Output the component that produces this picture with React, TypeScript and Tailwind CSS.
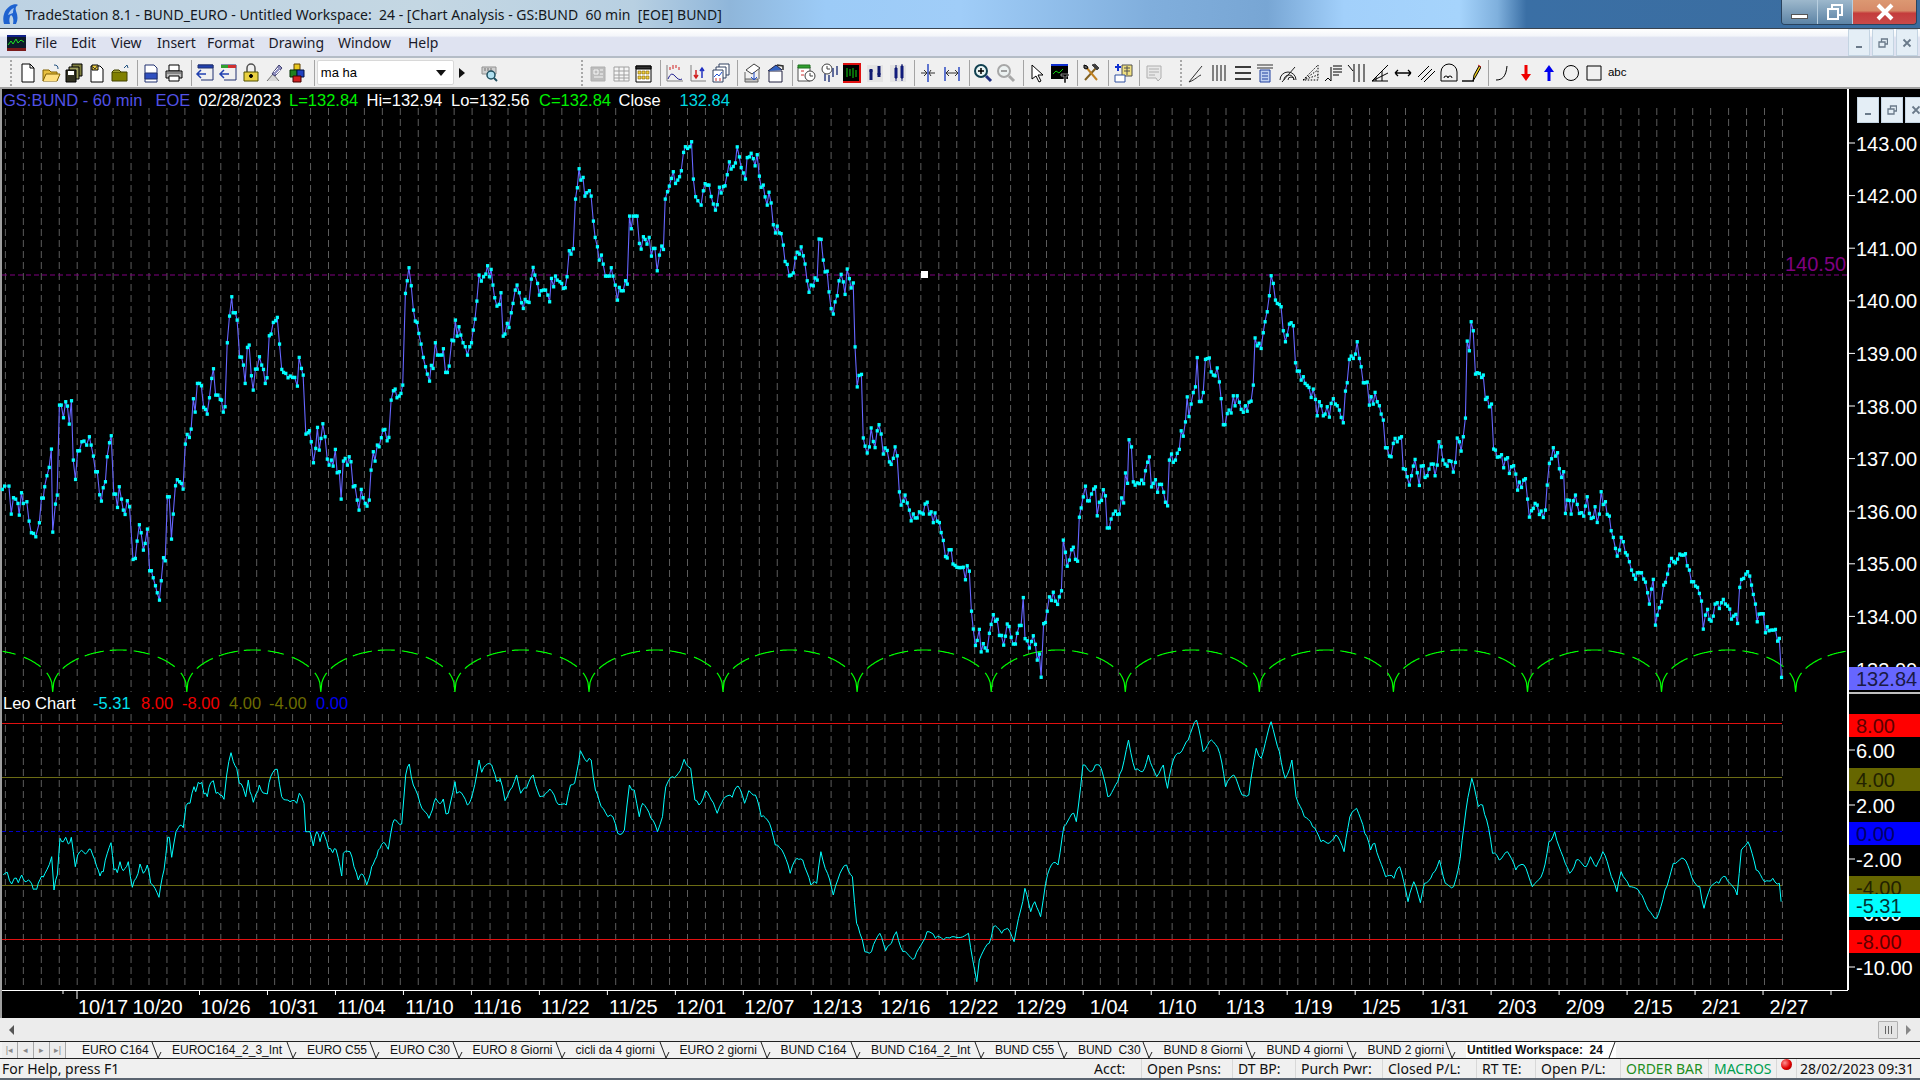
import React from "react";

const parse = (s: string) => s.trim().split(/\s+/).map((p) => p.split(",").map(Number));

const P1 = `5,1108 10,1098 20,1098 25,1182 30,1133 35,1137 40,1150 43,1185 48,1118 52,1150 60,1145 65,1203 70,1238 75,1240 80,1250 88,1208 93,1134 97,1134 100,1100 105,1067 110,1042 115,987 118,1236 124,1152 128,1125 133,855 137,855 142,893 147,845 151,858 155,912 160,842 164,1020 169,1078 174,992 178,992 183,965 188,963 194,975 200,950 204,975 209,1008 214,1055 218,1055 223,1124 227,1143 231,1103 236,1085 240,1010 245,968 249,947 255,1122 259,1122 263,1162 267,1100 272,1137 276,1170 280,1183 285,1142 290,1160 298,1318 303,1315 307,1263 312,1214 316,1238 321,1290 325,1270 330,1227 335,1352 339,1352 343,1373 348,1397 352,1418 357,1440 361,1382 366,1313 370,1322 375,1130 379,1130 384,1257 388,1182 393,1097 397,1079 402,1085 406,1090 410,1107 415,972 419,943 424,952 428,927 433,836 437,876 442,790 447,790 451,797 456,862 460,868 464,882 469,833 474,775 478,746 483,825 488,825 493,838 496,840 500,876 504,860 509,668 514,588 519,530 522,578 527,578 531,600 537,711 541,711 545,735 549,790 554,682 558,675 563,767 567,810 572,747 576,747 581,710 586,735 590,748 594,790 598,773 603,647 607,642 612,607 617,602 621,592 626,672 631,748 635,757 640,760 645,773 650,768 655,772 660,772 666,798 670,712 675,745 679,765 685,942 690,938 693,932 697,965 702,1028 707,985 711,922 715,990 719,955 723,911 728,950 733,1017 737,1035 742,1020 746,1038 751,988 755,1058 760,1055 764,1137 769,1023 773,1015 778,1035 782,1010 786,1025 791,1100 795,1097 800,1140 804,1170 809,1108 813,1133 818,1150 822,1158 827,1140 831,1050 836,995 840,1023 845,975 849,980 854,953 858,930 862,928 867,962 871,952 876,840 881,812 885,807 889,833 894,828 898,820 902,795 908,520 912,482 916,443 921,497 926,570 930,603 934,607 938,640 943,672 948,712 953,740 957,762 962,783 966,736 970,745 975,668 980,705 985,705 990,705 993,686 998,757 1002,757 1006,738 1012,660 1016,662 1020,600 1024,648 1028,620 1032,645 1037,668 1042,680 1047,705 1052,680 1056,668 1060,630 1064,597 1068,543 1073,465 1078,483 1083,470 1088,462 1092,437 1096,470 1100,448 1104,495 1108,533 1113,558 1118,553 1122,518 1127,648 1131,642 1136,610 1140,622 1145,578 1149,550 1154,510 1158,495 1163,518 1168,548 1172,565 1176,538 1180,545 1185,547 1190,477 1194,442 1198,465 1204,490 1208,525 1212,512 1217,510 1222,510 1227,525 1231,545 1235,475 1240,500 1244,468 1248,480 1254,485 1258,490 1262,505 1266,503 1270,470 1275,392 1279,402 1284,386 1289,237 1293,203 1297,146 1301,180 1306,172 1310,228 1314,218 1320,212 1324,228 1329,303 1333,352 1338,380 1342,420 1347,405 1351,432 1356,468 1360,468 1365,468 1369,443 1373,468 1378,495 1383,540 1387,502 1391,512 1396,512 1401,482 1405,492 1410,288 1414,326 1418,288 1423,288 1427,288 1432,370 1436,387 1441,350 1445,358 1449,372 1454,352 1459,408 1463,385 1467,385 1472,452 1477,405 1482,378 1486,388 1490,237 1495,215 1499,198 1504,175 1508,155 1513,190 1518,180 1522,170 1526,152 1531,97 1535,80 1540,85 1545,80 1549,65 1553,177 1558,230 1563,242`;
const P2 = `3,238 9,198 14,178 20,182 25,182 31,214 37,235 43,252 48,237 54,188 59,204 65,186 70,184 76,153 82,117 87,137 93,130 99,120 104,75 110,103 115,133 121,148 127,165 132,105 138,103 143,93 149,108 154,128 160,97 166,157 171,188 177,182 182,215 188,238 193,202 199,232 205,293 211,316 216,297 222,316 227,318 233,350 238,396 244,404 250,436 255,434 261,428 267,386 272,370 278,375 283,355 289,380 294,403 300,450 305,482 311,462 317,464 322,442 328,448 333,333 339,334 345,392 350,425 356,423 361,481 367,528 373,543 378,509 384,492 389,450 395,432 401,453 406,488 412,417 418,444 423,470 429,456 434,635 440,747 445,715 452,712 457,890 462,913 468,932 474,915 479,862 485,900 490,917 496,870 501,853 507,879 513,935 518,918 524,925 530,957 535,964 541,947 546,915 552,940 558,1041 563,1078 569,1067 574,1050 580,1072 586,1092 591,1122 597,1103 602,1114 608,1114 614,1097 619,1100 625,1103 630,1075 636,1070 642,1103 647,1097 653,1127 658,1100 664,1123 670,1127 675,1155 681,1177 687,1222 692,1226 697,1203 703,1203 708,1243 714,1247 719,1252 725,1253 731,1253 737,1252 743,1287 748,1248 754,1263 760,1375 765,1425 771,1471 776,1457 782,1426 787,1489 793,1466 798,1478 804,1486 810,1437 815,1412 821,1385 827,1403 832,1398 838,1443 844,1443 850,1470 855,1445 860,1411 865,1418 871,1448 877,1467 883,1467 888,1437 894,1415 899,1415 905,1337 910,1452 916,1458 922,1478 928,1460 933,1444 939,1468 944,1512 950,1495 955,1560 962,1410 967,1407 972,1375 978,1335 984,1345 989,1322 995,1347 1001,1356 1006,1335 1012,1318 1017,1176 1023,1210 1028,1249 1034,1232 1040,1203 1045,1196 1051,1230 1057,1235 1062,1112 1067,1086 1073,1055 1079,1025 1085,1066 1090,1066 1096,1047 1102,1033 1107,1027 1112,1108 1118,1070 1124,1065 1129,1035 1135,1052 1140,1142 1146,1142 1151,1117 1157,1103 1163,1095 1169,1104 1174,1103 1180,1058 1186,1072 1191,988 1197,1017 1201,895 1208,915 1213,1013 1218,1022 1224,1016 1230,1018 1236,1008 1242,1018 1247,982 1253,958 1258,943 1264,1027 1269,1017 1275,1007 1281,1042 1286,1020 1292,1020 1298,1042 1303,1070 1309,1080 1314,952 1320,935 1325,958 1331,952 1336,933 1342,922 1347,870 1353,885 1359,845 1364,775 1369,830 1375,795 1381,763 1387,747 1392,665 1398,788 1403,788 1409,763 1415,670 1420,668 1426,666 1431,705 1437,714 1442,716 1448,694 1454,733 1459,780 1465,853 1470,853 1476,822 1481,812 1487,820 1493,772 1498,800 1504,772 1510,790 1515,810 1521,818 1527,800 1532,815 1537,790 1543,787 1549,742 1554,610 1560,632 1565,625`;
const P3 = `3,265 9,218 14,185 20,155 26,107 31,47 37,70 43,120 48,130 54,133 59,140 65,212 71,245 76,225 82,192 87,188 93,197 99,308 104,333 110,333 115,360 121,350 126,370 132,376 137,382 143,412 149,387 155,418 160,467 166,425 171,437 177,467 182,462 188,440 194,471 199,430 205,416 211,432 216,437 222,450 227,472 233,488 239,393 244,368 250,298 255,288 261,295 267,282 272,245 278,295 283,320 289,368 294,368 300,366 306,435 311,410 317,432 322,397 328,425 334,437 339,462 345,480 351,563 356,563 362,588 367,590 373,550 378,535 384,545 390,534 396,530 401,626 407,628 412,650 418,675 424,647 429,618 434,598 440,638 446,676 451,618 457,617 462,652 468,647 473,627 479,612 485,612 490,647 496,615 501,545 507,560 512,600 518,612 524,618 529,602 535,604 541,636 547,607 552,534 558,545 563,573 569,530 575,474 580,243 586,272 591,185 597,212 603,342 608,338 614,340 620,352 625,345 631,418 636,412 642,440 648,432 654,567 659,570 664,591 670,590 676,584 682,623 687,597 693,593 698,640 704,620 710,617 716,642 721,690 726,666 732,682 738,660 743,656 749,717 754,771 760,752 765,745 770,730 776,735 782,763 787,753 793,772 799,750 804,675 810,610 816,596 821,563 827,588 833,578 838,626 844,652 850,635 855,760 860,720 866,721 871,762 877,722 883,705 888,733 894,760 900,758 906,768 911,738 916,710 922,760 927,775 933,772 938,740 944,787 950,762 955,695 961,733 967,725 972,763 978,768 983,812 989,832 995,865 1000,888 1006,870 1011,832 1017,845 1023,878 1028,885 1034,905 1040,930 1046,945 1051,957 1056,938 1062,938 1068,938 1074,957 1079,966 1085,998 1090,1032 1096,987 1101,958 1107,1095 1112,1065 1118,1043 1124,1025 1130,975 1135,967 1141,942 1146,917 1152,895 1158,905 1163,908 1169,897 1175,882 1180,885 1186,885 1191,881 1196,917 1202,930 1208,965 1214,965 1219,978 1225,982 1230,1000 1236,1023 1241,1107 1247,1065 1253,1048 1258,1078 1263,1083 1269,1068 1274,1032 1280,1028 1286,1045 1292,1028 1297,1018 1303,1032 1309,1038 1315,1047 1320,1077 1326,1068 1332,1063 1337,1090 1343,982 1348,958 1354,955 1360,942 1365,935 1371,948 1376,975 1381,1003 1387,1032 1392,1085 1397,1062 1403,1061 1409,1061 1415,1118 1420,1100 1425,1112 1431,1110 1437,1110 1443,1108 1449,1143 1454,1135 1460,1252`;
const O1 = `10,705 22,697 35,732 43,715 55,728 65,705 70,717 85,720 100,748 110,748 125,708 135,700 155,650 162,750 172,705 180,595 190,605 197,592 205,612 214,592 226,680 233,645 250,635 262,637 272,628 290,680 300,708 310,695 322,640 333,608 342,690 352,698 360,665 370,692 385,665 397,742 408,715 420,672 430,700 442,675 452,730 465,745 477,772 492,690 503,592 508,592 515,652 528,575 535,563 550,563 558,497 570,490 582,440 587,455 595,427 605,427 612,462 622,470 632,428 640,422 648,460 660,465 672,478 680,405 693,338 700,365 710,385 718,430 730,445 737,470 745,420 750,455 760,487 768,462 778,435 795,460 802,462 812,410 832,388 845,470 870,485 890,490 898,460 912,490 917,575 930,575 940,618 950,575 960,605 970,575 985,625 998,638 1008,628 1015,655 1025,708 1030,640 1050,635 1062,680 1075,720 1085,702 1100,735 1115,680 1130,650 1140,625 1155,610 1165,628 1178,550 1187,540 1205,552 1217,405 1228,372 1240,435 1260,490 1287,535 1297,510 1307,475 1315,487 1330,477 1338,522 1345,520 1365,425 1370,460 1378,455 1402,495 1418,460 1437,360 1445,397 1462,372 1475,375 1490,425 1500,425`;
const O2 = `0,205 6,272 12,240 20,195 25,250 32,235 40,195 48,260 55,250 60,237 68,275 80,285 85,225 90,220 97,122 105,155 110,150 115,240 122,290 130,320 136,320 142,370 150,360 156,225 162,240 168,320 172,280 182,325 190,365 196,320 200,230 208,200 215,190 222,148 230,175 235,270 240,285 248,242 255,270 262,310 270,265 280,262 287,228 295,280 300,242 308,255 315,320 325,340 332,405 340,420 350,490 358,445 365,450 375,525 382,520 387,425 395,490 402,555 410,490 418,465 425,500 430,640 434,670 440,725 448,725 458,670 465,722 472,700 478,665 486,725 500,745 515,665 525,685 535,690 545,680 565,670 575,815 578,750 590,700 595,650 605,670 612,655 620,695 628,600 633,535 640,605 645,575 652,620 658,520 665,465 673,465 680,350 692,310 695,335 703,165 712,185 718,165 725,175 733,260 745,215 750,180 758,90 766,180 775,185 782,135 792,200 800,165 805,235 812,150 820,130 830,90 840,30 848,125 858,90 868,130 875,230 885,195 895,255 903,255 912,115 918,145 930,35 940,125 947,205 955,150 960,260 970,320 980,350 990,395 1000,400 1008,375 1018,425 1025,320 1033,295 1043,370 1050,420 1055,400 1068,500 1078,505 1085,470 1095,575 1102,515 1110,578 1115,520 1125,490 1133,450 1140,520 1150,530 1158,445 1165,300 1172,205 1180,290 1185,285 1190,330 1197,430 1205,450 1215,425 1225,480 1235,465 1245,530 1258,485 1265,395 1272,365 1282,440 1290,490 1298,450 1310,470 1315,440 1322,470 1330,425 1338,480 1347,545 1352,485 1362,530 1375,550 1385,600 1395,625 1405,540 1415,460 1428,447 1437,500 1447,530 1452,595 1460,530 1470,520 1478,500 1492,555 1497,420 1505,395 1515,480 1525,515 1535,505 1543,520 1545,575`;

const price: number[][] = [
  ...parse(P1).map(([x, y]) => [x / 2.24, 120 + y / 3]),
  ...parse(P2).map(([x, y]) => [700 + x / 2.8, 120 + y / 2.8]),
  ...parse(P3).map(([x, y]) => [1260 + x / 2.8, 260 + y / 3]),
];
const oscRaw: number[][] = [
  ...parse(O1).map(([x, y]) => [x / 3, 640 + y / 3]),
  ...parse(O2).map(([x, y]) => [500 + x / 1.206, 710 + y / 3]),
];
const osc: number[][] = [];
for (let i = 0; i < oscRaw.length - 1; i++) {
  const [x0, y0] = oscRaw[i];
  const [x1, y1] = oscRaw[i + 1];
  const n = Math.max(1, Math.round((x1 - x0) / 2));
  for (let k = 0; k < n; k++) {
    const t = k / n;
    const w = k === 0 ? 0 : Math.sin((x0 + k) * 12.9898) * 2.5;
    osc.push([x0 + (x1 - x0) * t, y0 + (y1 - y0) * t + w]);
  }
}
osc.push(oscRaw[oscRaw.length - 1]);

const pts = (a: number[][]) => a.map(([x, y]) => `${x.toFixed(1)},${y.toFixed(1)}`).join(" ");

// cycle arches: fixed dash runs measured from each cusp, so that every V shows
const CYCLE_FIRST = 52.7;
const CYCLE_STEP = 134.07;
const cycleY = (off: number) => 650 + 42 * (1 - Math.pow(Math.sin((Math.PI * off) / CYCLE_STEP), 0.4));
const runs: [number, number][] = [[10, 26], [32, 51], [57, 74], [81, 97], [105, 122]];
const cycleSegs: string[] = [];
const segment = (a: number, b: number, cusp: number) => {
  const out: string[] = [];
  for (let o = a; o <= b; o += 1) {
    const x = cusp + o;
    if (x < 2 || x > 1846) continue;
    out.push(`${x.toFixed(1)},${cycleY(Math.abs(o)).toFixed(1)}`);
  }
  if (out.length > 1) cycleSegs.push(out.join(" "));
};
for (let c = -1; c < 15; c++) {
  const cusp = CYCLE_FIRST + c * CYCLE_STEP;
  segment(-6, 6, cusp);
  runs.forEach(([a, b]) => segment(a, b, cusp));
}

const gridXs = Array.from({ length: 100 }, (_, i) => 5.4 + 17.95 * i);
const dates = ["10/26","10/31","11/04","11/10","11/16","11/22","11/25","12/01","12/07","12/13","12/16","12/22","12/29","1/04","1/10","1/13","1/19","1/25","1/31","2/03","2/09","2/15","2/21","2/27"];
const priceLabels = [143,142,141,140,139,138,137,136,135,134,133];

function Chart() {
  const Y0 = 89;
  return (
    <svg width={1920} height={929} viewBox={`0 ${Y0} 1920 929`} className="block font-['Liberation_Sans',sans-serif]">
      <rect x={0} y={Y0} width={1920} height={929} fill="#000" />
      <rect x={0} y={Y0} width={2} height={929} fill="#a0a0a0" />
      {gridXs.map((x) => (
        <g key={x}>
          <line x1={x} x2={x} y1={108} y2={692} stroke="#5c5c5c" strokeDasharray="7 4" />
          <line x1={x} x2={x} y1={714} y2={987} stroke="#5c5c5c" strokeDasharray="7 4" />
        </g>
      ))}
      <line x1={2} x2={1847} y1={275} y2={275} stroke="#800080" strokeDasharray="5 3" />
      {cycleSegs.map((s, i) => (
        <polyline key={i} points={s} fill="none" stroke="#00ff00" strokeWidth={1.2} />
      ))}
      <polyline points={pts(price)} fill="none" stroke="#6666ff" strokeWidth={1.1} />
      {price.map(([x, y], i) => (
        <rect key={i} x={x - 1.5} y={y - 1.6} width={3.2} height={3.4} fill="#00ffff" />
      ))}
      <rect x={921} y={271} width={7} height={7} fill="#fff" />

      <line x1={2} x2={1782} y1={723.5} y2={723.5} stroke="#e01010" strokeWidth={1.2} />
      <line x1={2} x2={1782} y1={777.5} y2={777.5} stroke="#6c6c14" strokeWidth={1.2} />
      <line x1={2} x2={1782} y1={831.5} y2={831.5} stroke="#0000c8" strokeDasharray="4 3" />
      <line x1={2} x2={1782} y1={885.5} y2={885.5} stroke="#6c6c14" strokeWidth={1.2} />
      <line x1={2} x2={1782} y1={939.5} y2={939.5} stroke="#e01010" strokeWidth={1.2} />
      <polyline points={pts(osc)} fill="none" stroke="#00ffff" strokeWidth={1} />

      {/* legends */}
      <g fontSize={16.5}>
        <text x={3} y={106} fill="#5252e6">GS:BUND - 60 min</text>
        <text x={155.5} y={106} fill="#5252e6">EOE</text>
        <text x={198.5} y={106} fill="#fff">02/28/2023</text>
        <text x={289} y={106} fill="#00f000">L=132.84</text>
        <text x={366.5} y={106} fill="#fff">Hi=132.94</text>
        <text x={451} y={106} fill="#fff">Lo=132.56</text>
        <text x={539} y={106} fill="#00f000">C=132.84</text>
        <text x={618.5} y={106} fill="#fff">Close</text>
        <text x={679.5} y={106} fill="#00d8e0">132.84</text>
        <text x={3} y={709} fill="#fff">Leo Chart</text>
        <text x={93} y={709} fill="#00e0f0">-5.31</text>
        <text x={141} y={709} fill="#f00000">8.00</text>
        <text x={182} y={709} fill="#f00000">-8.00</text>
        <text x={229} y={709} fill="#6c6c00">4.00</text>
        <text x={269} y={709} fill="#6c6c00">-4.00</text>
        <text x={316} y={709} fill="#0000f0">0.00</text>
      </g>
      <text x={1785} y={271} fontSize={20} fill="#800080">140.50</text>

      {/* right axis */}
      <g fontSize={20} fill="#fff">
        {priceLabels.map((p, i) => (
          <g key={p}>
            <line x1={1849} x2={1855} y1={143 + i * 52.6} y2={143 + i * 52.6} stroke="#fff" />
            <text x={1856} y={150.5 + i * 52.6}>{p}.00</text>
          </g>
        ))}
        {[["6.00", 750], ["2.00", 805], ["-2.00", 859], ["-6.00", 913], ["-10.00", 967]].map(([t, y]) => (
          <g key={t as string}>
            <line x1={1849} x2={1855} y1={y as number} y2={y as number} stroke="#fff" />
            <text x={1856} y={(y as number) + 7.5}>{t}</text>
          </g>
        ))}
      </g>
      <line x1={1848} x2={1848} y1={89} y2={990} stroke="#fff" strokeWidth={2} />
      <line x1={1847} x2={1920} y1={693} y2={693} stroke="#fff" strokeWidth={1.5} />
      {[
        [667, 23, "#6666ff", "132.84", "#1a1a44"],
        [714, 23, "#ff0000", "8.00", "#5c0000"],
        [768, 23, "#666600", "4.00", "#222200"],
        [822, 23, "#0000ff", "0.00", "#000066"],
        [876, 23, "#666600", "-4.00", "#222200"],
        [894, 23, "#00ffff", "-5.31", "#003333"],
        [930, 23, "#ff0000", "-8.00", "#5c0000"],
      ].map(([y, h, bg, t, c]) => (
        <g key={t as string}>
          <rect x={1849} y={y as number} width={71} height={h as number} fill={bg as string} />
          <text x={1856} y={(y as number) + 19} fontSize={20} fill={c as string}>{t}</text>
        </g>
      ))}

      {/* bottom axis */}
      <line x1={2} x2={1848} y1={990.5} y2={990.5} stroke="#fff" />
      <line x1={63} x2={63} y1={990} y2={994} stroke="#fff" />
      <line x1={77} x2={77} y1={990} y2={999} stroke="#fff" />
      {dates.map((d, i) => (
        <line key={d} x1={199.5 + i * 67.98} x2={199.5 + i * 67.98} y1={990} y2={995} stroke="#fff" />
      ))}
      <line x1={1831} x2={1831} y1={990} y2={995} stroke="#fff" />
      <g fontSize={20} fill="#fff" textAnchor="middle">
        <text x={103} y={1014}>10/17</text>
        <text x={157.5} y={1014}>10/20</text>
        {dates.map((d, i) => (
          <text key={d} x={225.5 + i * 67.98} y={1014}>{d}</text>
        ))}
      </g>
    </svg>
  );
}

const I = ({ children, dim }: { children?: React.ReactNode; dim?: boolean }) => (
  <div className={`flex h-[22px] w-[22.9px] shrink-0 items-center justify-center ${dim ? "opacity-45" : ""}`}>
    <svg width={20} height={22} viewBox="0 0 20 22" fill="none" stroke="#000" strokeWidth={1}>{children}</svg>
  </div>
);
const Sep = () => (
  <div className="flex h-[26px] w-[8.4px] shrink-0 justify-end pr-[2px]">
    <div className="h-full w-px bg-[#a4a4a4]" />
  </div>
);
const Grip = () => <div className="h-[26px] w-[2px] shrink-0 border-l-2 border-dotted border-[#a8a8a8]" />;

function Toolbar() {
  return (
    <div className="flex h-[31px] shrink-0 items-center border-b-2 border-[#a0a0a0] bg-[#f0f0f0] pl-[10px] font-['Liberation_Sans',sans-serif]">
      <Grip />
      <div className="w-[5px] shrink-0" />
      <I><path d="M4 2h8l4 4v14H4z" fill="#fff" /><path d="M12 2v4h4" /></I>
      <I><path d="M2 8h6l2 2h6v9H2z" fill="#e8c040" stroke="#806000" /><path d="M2 19l3-7h14l-3 7" fill="#ffe080" stroke="#806000" /><path d="M13 3c3 0 4 1 4 4" stroke="#205080" /></I>
      <I><path d="M8 2h10v12H8z" fill="#808040" /><path d="M5 5h10v12H5z" fill="#a0a060" /><path d="M2 8h10v12H2z" fill="#303020" /><path d="M4 9h6v4H4z" fill="#fff" stroke="none" /></I>
      <I><path d="M4 4h9l3 3v13H4z" fill="#fff" /><path d="M5 3h6v5H5z" fill="#f0d040" /><path d="M6 5l2 2 3-4" stroke="#303030" /></I>
      <I><path d="M2 10h15v9H2z" fill="#808000" stroke="#404000" /><path d="M2 10l2-2h5l2 2" fill="#a0a030" stroke="#404000" /><path d="M14 6l3-3 1 3" stroke="#205080" /></I>
      <Sep />
      <I><path d="M4 3h9l3 3v14H4z" fill="#fff" stroke="#203070" /><path d="M4 11h12v6H4z" fill="#3050c0" stroke="#203070" /></I>
      <I><path d="M5 3h10v6H5z" fill="#fff" /><path d="M2 9h16v7H2z" fill="#c0c0c0" /><path d="M5 14h10v5H5z" fill="#fff" /><path d="M3 11h14" stroke="#505050" /></I>
      <Sep />
      <I><path d="M3 3h15v15H6" stroke="#203070" /><path d="M3 3h15v3H3z" fill="#2040b0" stroke="#203070" /><path d="M2 12h9M6 8l-4 4 4 4" stroke="#2040b0" strokeWidth={1.5} /></I>
      <I><path d="M3 3h15v15H6" stroke="#203070" /><path d="M3 3h7v3H3z" fill="#30a030" stroke="none" /><path d="M10 3h8v3h-8z" fill="#d03030" stroke="none" /><path d="M2 12h9M6 8l-4 4 4 4" stroke="#2040b0" strokeWidth={1.5} /></I>
      <I><path d="M6 10V6a4 4 0 018 0v4" stroke="#505050" strokeWidth={1.5} /><path d="M3 10h14v9H3z" fill="#e8d040" stroke="#505000" /><circle cx={10} cy={14} r={1.5} fill="#000" /></I>
      <I><path d="M3 19l6-7 6 7" stroke="#707070" fill="#d8d8d8" /><path d="M8 12L15 3l3 3-7 8z" fill="#9090c0" stroke="#404070" /><path d="M10 10l4-4M12 12l4-4" stroke="#fff" /></I>
      <I><path d="M7 2h6v6H7z" fill="#e8c820" stroke="#604000" /><path d="M3 8h7v7H3z" fill="#208020" stroke="#003000" /><path d="M10 8h7v7h-7z" fill="#2040c0" stroke="#001040" /><path d="M6 14h8v6H6z" fill="#d02020" stroke="#400000" /></I>
      <Sep />
      <div className="flex h-[25px] w-[137px] shrink-0 items-center justify-between rounded-[2px] border border-[#d8d8d8] bg-white pl-[3px] pr-[7px] text-[13px] text-black">
        <span>ma ha</span>
        <div className="h-0 w-0 border-x-[5px] border-t-[6px] border-x-transparent border-t-[#111]" />
      </div>
      <div className="flex w-[16px] shrink-0 justify-center">
        <div className="h-0 w-0 border-y-[5px] border-l-[6px] border-y-transparent border-l-[#111]" />
      </div>
      <div className="w-[8.5px] shrink-0" />
      <I><path d="M2 5h14v7H2z" fill="#d0d0d0" stroke="#909090" /><path d="M5 6v3M8 6v3M11 6v3" stroke="#707070" /><circle cx={11} cy={13} r={4} fill="#b0e0f0" stroke="#205060" strokeWidth={1.5} /><path d="M14 16l3 3" stroke="#205060" strokeWidth={2} /></I>
      <div className="w-[80px] shrink-0" />
      <Grip />
      <div className="w-[3px] shrink-0" />
      <I dim><path d="M3 5h14v14H3z" fill="#808080" stroke="#606060" /><path d="M6 8h4v4H6zM12 8h3M12 12h3M6 15h9" stroke="#fff" /></I>
      <I dim><path d="M3 5h15v14H3z" fill="#fff" stroke="#404040" /><path d="M3 9h15M3 13h15M3 16h15M8 5v14M13 5v14" stroke="#404040" /></I>
      <I><path d="M3 4h15v16H3z" fill="#fff" stroke="#000" /><path d="M3 4h15v3H3z" fill="#303030" /><path d="M5 9h3v3H5zM9 9h3v3H9zM13 9h3v3h-3zM5 14h3v3H5zM9 14h3v3H9zM13 14h3v3h-3z" fill="#f0d040" stroke="#806000" strokeWidth={0.6} /></I>
      <Sep />
      <I><path d="M2 3v16h16" stroke="#808080" fill="#f0f0f0" /><path d="M3 17q3-8 7-3t7 3" stroke="#202090" /><path d="M5 5v3M8 3v4M11 3v3M14 5v3" stroke="#d02020" /></I>
      <I><path d="M3 3v16h15" stroke="#808080" /><path d="M8 8v8M6 13l2 3 2-3" stroke="#d02020" strokeWidth={1.5} /><path d="M14 16V6M12 9l2-3 2 3" stroke="#2030c0" strokeWidth={1.5} /></I>
      <I><path d="M8 2h10v11H8z" fill="#fff" stroke="#304060" /><path d="M5 5h10v11H5z" fill="#fff" stroke="#304060" /><path d="M2 8h10v12H2z" fill="#fff" stroke="#304060" /><path d="M3 15l3-3 2 2 3-4" stroke="#2050d0" /><path d="M5 19v-3M9 19v-3" stroke="#d03030" /></I>
      <Sep />
      <I><path d="M3 17h13v3H3z" fill="#c0c0c0" stroke="#606060" /><path d="M4 8l8-6 6 4-8 6z" fill="#fff" stroke="#404040" /><path d="M3 10v7M17 7v10" stroke="#606060" /><path d="M12 10v8M9 15l3 3 3-3" stroke="#2050d0" /></I>
      <I><path d="M4 9h13v11H4z" fill="#fff" stroke="#202040" /><path d="M3 9l8-6 6 5" fill="#3060c0" stroke="#202040" /><path d="M12 3l6 1v4" stroke="#303030" strokeWidth={1.5} /></I>
      <Sep />
      <I><path d="M2 5h12v14H2z" fill="#fff" stroke="#505050" /><path d="M2 3h12v3H2z" fill="#30a030" stroke="#207020" /><circle cx={14} cy={14} r={5} fill="#fff" stroke="#404040" /><path d="M14 11v3h3" stroke="#404040" /><path d="M5 9h3M5 13h3" stroke="#d03030" /></I>
      <I><circle cx={8} cy={7} r={5} fill="#fff" stroke="#404040" /><path d="M8 4v3h3" stroke="#404040" /><path d="M6 12v7M10 13v7M14 6v9M18 4v9" stroke="#304080" strokeWidth={1.5} /></I>
      <I><path d="M1 2h18v18H1z" fill="#000" stroke="none" /><path d="M1 2h18M18 2v18M1 20h18" stroke="#e01010" strokeWidth={2} /><path d="M5 6v9M8 7v7M11 6v10M14 8v7" stroke="#10d010" /></I>
      <I><path d="M2 3h16v17H2z" fill="#e4e4e4" stroke="none" /><path d="M6 7v11M14 4v11" stroke="#101a70" strokeWidth={3} /><path d="M4 9h4M12 12h4" stroke="#101a70" /></I>
      <I><path d="M2 3h16v17H2z" fill="#e4e4e4" stroke="none" /><path d="M7 6h2v10H7zM13 4h2v12h-2z" fill="#1020a0" stroke="#101a70" /><path d="M8 3v16M14 2v17" stroke="#101a70" /></I>
      <Sep />
      <I><path d="M9 2v18" stroke="#2040c0" strokeWidth={1.4} /><path d="M2 11h6M5 8l3 3-3 3M16 11h-6M12 8l-2 3 2 3" stroke="#303030" /></I>
      <I><path d="M3 5v14M17 5v14" stroke="#2040c0" strokeWidth={1.4} /><path d="M4 11h12M7 8l-3 3 3 3M13 8l3 3-3 3" stroke="#303030" /></I>
      <Sep />
      <I><circle cx={8} cy={9} r={6} fill="#e8f4f4" stroke="#104050" strokeWidth={2} /><path d="M8 6v6M5 9h6" stroke="#000" strokeWidth={1.5} /><path d="M13 14l5 5" stroke="#203080" strokeWidth={3} /></I>
      <I dim><circle cx={8} cy={9} r={6} fill="#e8f4f4" stroke="#505050" strokeWidth={2} /><path d="M5 9h6" stroke="#000" strokeWidth={1.5} /><path d="M13 14l5 5" stroke="#505050" strokeWidth={3} /></I>
      <Sep />
      <I><path d="M5 3v14l4-3 3 6 2-1-3-6h5z" fill="#fff" stroke="#000" /></I>
      <I><path d="M1 2h17v15H1z" fill="#000" stroke="none" /><path d="M1 3h17" stroke="#1030d0" strokeWidth={2} /><path d="M3 12l3-3 3 2 4-4" stroke="#10d010" /><path d="M11 12h8v2h-3v7h-2v-7h-3z" fill="#000" stroke="#fff" strokeWidth={0.5} /></I>
      <Sep />
      <I><path d="M4 18L15 6" stroke="#806020" strokeWidth={2} /><path d="M11 3l5 5 2-2-4-4z" fill="#404040" stroke="#404040" /><path d="M5 5l11 13" stroke="#c08020" strokeWidth={2} /><path d="M3 3l3 1 1 2-2 1-2-1z" fill="#606060" /></I>
      <Sep />
      <I><path d="M9 3h10v11H9z" fill="#f0e080" stroke="#505050" /><path d="M11 6h6M11 9h6M14 4v9" stroke="#505050" /><path d="M2 13h10v7H2z" fill="#fff" stroke="#3050a0" /><path d="M5 2v7M2 5h6" stroke="#1030d0" strokeWidth={2} /></I>
      <Sep />
      <I dim><path d="M3 4h14v12l-3 3-2-3H3z" fill="#e0e0e0" stroke="#606060" /><path d="M5 7h10M5 10h10M5 13h6" stroke="#606060" /></I>
      <div className="w-[15px] shrink-0" />
      <Grip />
      <div className="w-[3px] shrink-0" />
      <I><path d="M2 20L15 4M2 20c6-2 9-6 12-7" strokeWidth={1} stroke="#303030" /></I>
      <I><path d="M3 3v16M7 3v16M11 3v16M15 3v16" stroke="#101010" /></I>
      <I><path d="M2 5h16M2 11h16M2 17h16" stroke="#000" strokeWidth={1.4} /></I>
      <I><path d="M2 3h16M2 6h16" stroke="#303030" /><path d="M5 8h10v12H5z" fill="#c0d0f0" stroke="#2040a0" /><path d="M7 11h6M7 14h6M7 17h6" stroke="#2040a0" /></I>
      <I><path d="M2 18a8 8 0 0116 0M6 18a5 5 0 0110 0M10 18a3 3 0 016 0" stroke="#202020" /><path d="M4 20L17 5" stroke="#202020" /></I>
      <I><path d="M2 18L17 3v15z" strokeDasharray="1.5 1.5" /><path d="M2 18L17 8M2 18L17 13" strokeDasharray="1.5 1.5" /></I>
      <I><path d="M1 19l3-3 3 3V5" stroke="#000" /><path d="M9 4h9M9 7h9M9 10h9M9 13h6" stroke="#000" /></I>
      <I><path d="M1 3l5 6M7 2v18M12 2v18M17 2v18" stroke="#000" /></I>
      <I><path d="M2 19L18 3M2 19h16M2 19L18 11M6 15v4M12 9v10" stroke="#000" /></I>
      <I><path d="M2 11h16M2 11l3-3M2 11l3 3M18 11l-3-3M18 11l-3 3" stroke="#000" strokeWidth={1.3} /></I>
      <I><path d="M2 15L13 4M5 18L16 7M8 20L19 9" stroke="#000" /></I>
      <I><path d="M2 19V10a8 8 0 0116 0v9M2 19h16" stroke="#000" /><path d="M5 16a2 2 0 014 0M9 16a2 2 0 014 0" stroke="#000" /></I>
      <I><path d="M1 19h12" stroke="#000" strokeWidth={1.4} /><path d="M12 19l1-6 5-9 2 1-5 9z" fill="#f0d020" stroke="#000" /><path d="M17 3l3 2" stroke="#d02020" /></I>
      <Sep />
      <I><path d="M3 18c6 0 10-3 11-14" stroke="#000" /></I>
      <I><path d="M10 3v10" stroke="#ee0000" strokeWidth={3} /><path d="M5 12h10l-5 7z" fill="#ee0000" stroke="none" /></I>
      <I><path d="M10 19V9" stroke="#0000ee" strokeWidth={3} /><path d="M5 10h10l-5-7z" fill="#0000ee" stroke="none" /></I>
      <I><circle cx={10} cy={11} r={7.5} stroke="#000" /></I>
      <I><path d="M3 4h14v14H3z" stroke="#000" /></I>
      <div className="flex w-[22.9px] shrink-0 justify-center text-[11.5px] text-black">abc</div>
    </div>
  );
}

const MdiBtn = ({ kind, className }: { kind: "min" | "res" | "close"; className: string }) => (
  <div className={`flex items-center justify-center border border-[#c4d4e2] bg-[#e4eef6] ${className}`}>
    <svg width={10} height={10} viewBox="0 0 10 10" fill="none" stroke="#6a7a8a" strokeWidth={1.3}>
      {kind === "min" && <path d="M2 9h6" strokeWidth={2} />}
      {kind === "res" && <path d="M1 4h6v5H1zM3.5 4V1h6v5H7" />}
      {kind === "close" && <path d="M1.5 1.5l7 7M8.5 1.5l-7 7" strokeWidth={1.8} />}
    </svg>
  </div>
);

const menus: [string, number][] = [["File", 36.3], ["Edit", 40], ["View", 46], ["Insert", 50], ["Format", 61.6], ["Drawing", 69.4], ["Window", 70], ["Help", 40]];
const leftTabs: [string, number][] = [["EURO C164", 90], ["EUROC164_2_3_Int", 135], ["EURO C55", 83], ["EURO C30", 82.5], ["EURO 8 Giorni", 103], ["cicli da 4 giorni", 104], ["EURO 2 giorni", 101], ["BUND C164", 90.4], ["BUND C164_2_Int", 124], ["BUND C55", 83], ["BUND  C30", 85.5], ["BUND 8 Giorni", 103], ["BUND 4 giorni", 101], ["BUND 2 giorni", 98.7]];
const cells: [string, number, string][] = [["Acct:", 47, "text-[#111]"], ["Open Psns:", 91, "text-[#111]"], ["DT BP:", 63, "text-[#111]"], ["Purch Pwr:", 87, "text-[#111]"], ["Closed P/L:", 94, "text-[#111]"], ["RT TE:", 59, "text-[#111]"], ["Open P/L:", 85, "text-[#111]"], ["ORDER BAR", 88, "text-[#1f8f1f]"], ["MACROS", 68, "text-[#00a050]"]];

export default function App() {
  return (
    <div className="flex h-[1080px] w-[1920px] flex-col overflow-hidden bg-[#f0f0f0]">
      {/* title bar */}
      <div className="relative flex h-[29px] shrink-0 items-center border-b border-[#3a4450] bg-[linear-gradient(90deg,#bdd2e3_0%,#c4d7e3_22%,#b8d0e2_33%,#8fb6da_38%,#9ccbf7_43%,#a0cdf8_50%,#80aedc_60%,#78a6d4_66%,#a2d0fb_70%,#a6d4fc_76%,#7fb0dd_78%,#3a6fa5_79.5%,#3b6d9f_100%)] pl-[2px] font-['Noto_Sans',sans-serif] text-[14px] text-[#141820]">
        <svg width={18} height={22} viewBox="0 0 18 22" className="shrink-0">
          <path d="M2 21C0 14 2 7 8 3c3-2 7-2 8-1-2 1-3 3-2 6 2 5 2 9 0 13h-3c1-4 0-8-2-9-2 2-2 6-1 9z" fill="#1e62d0" />
          <path d="M6 12c1-3 3-6 6-7-1 2-1 4-1 5" fill="#a8c8f0" />
        </svg>
        <span className="ml-[5px] whitespace-pre">TradeStation 8.1 - BUND_EURO - Untitled Workspace:  24 - [Chart Analysis - GS:BUND  60 min  [EOE] BUND]</span>
        <div className="absolute right-[3px] top-0 flex h-[25px] overflow-hidden rounded-b-[4px] border border-t-0 border-[#29435e]">
          <div className="flex w-[36px] items-end justify-center border-r border-[#b8cfe0] bg-[linear-gradient(#9db8cc,#5d84a6)] pb-[5px]">
            <div className="h-[5px] w-[17px] border border-[#555] bg-white" />
          </div>
          <div className="flex w-[35px] items-center justify-center border-r border-[#b8cfe0] bg-[linear-gradient(#9db8cc,#5d84a6)]">
            <svg width={18} height={18} viewBox="0 0 18 18" fill="none" stroke="#fff" strokeWidth={2}><path d="M2 6h10v10H2zM6 6V2h10v10h-4" /></svg>
          </div>
          <div className="flex w-[63px] items-center justify-center bg-[linear-gradient(#dc9872_0%,#d68a68_45%,#c43c3c_55%,#c84a4a_100%)]">
            <svg width={20} height={18} viewBox="0 0 20 18" fill="none" stroke="#fff" strokeWidth={4}><path d="M3 2l14 14M17 2L3 16" /></svg>
          </div>
        </div>
      </div>
      {/* menu */}
      <div className="relative flex h-[29px] shrink-0 items-center border-b-2 border-[#b4bcc6] bg-[linear-gradient(#ffffff_0%,#f4f6fa_25%,#dfe3f1_32%,#dfe3f1_100%)] pl-[7px] font-['Noto_Sans',sans-serif] text-[14px] text-[#1a1a2a]">
        <svg width={19} height={16} viewBox="0 0 19 16" className="shrink-0">
          <rect width={19} height={16} fill="#0c1a2a" />
          <rect y={0} width={19} height={2} fill="#10208a" />
          <path d="M1 10l3-4 2 3 3-5 2 4 3-3 3 2" fill="none" stroke="#20e020" strokeWidth={1} />
          <rect y={13} width={19} height={3} fill="#7a1a1a" />
        </svg>
        <div className="ml-[8.7px] flex">
          {menus.map(([m, w]) => (
            <div key={m} className="shrink-0" style={{ width: w }}>{m}</div>
          ))}
        </div>
        <div className="ml-auto mr-[2px] flex h-[27px] gap-[2px]">
          <MdiBtn kind="min" className="w-[22px]" />
          <MdiBtn kind="res" className="w-[22px]" />
          <MdiBtn kind="close" className="w-[22px]" />
        </div>
      </div>
      <Toolbar />
      {/* chart */}
      <div className="relative h-[929px] shrink-0">
        <Chart />
        <div className="absolute left-[1857px] top-[8px] flex h-[26px] gap-[2px]">
          <MdiBtn kind="min" className="w-[22px]" />
          <MdiBtn kind="res" className="w-[22px]" />
          <MdiBtn kind="close" className="w-[22px]" />
        </div>
      </div>
      {/* scrollbar */}
      <div className="flex h-[23px] shrink-0 items-center justify-between bg-[#ececec] pl-[9px] pr-[9px]">
        <div className="h-0 w-0 border-y-[5px] border-r-[5px] border-y-transparent border-r-[#555]" />
        <div className="flex items-center gap-[8px]">
          <div className="flex h-[18px] w-[20px] items-center justify-center gap-[2px] rounded-[1px] border border-[#b0b0b0] bg-[#e4e4e4]">
            <div className="h-[8px] w-px bg-[#666]" /><div className="h-[8px] w-px bg-[#666]" /><div className="h-[8px] w-px bg-[#666]" />
          </div>
          <div className="h-0 w-0 border-y-[5px] border-l-[5px] border-y-transparent border-l-[#888]" />
        </div>
      </div>
      {/* tabs */}
      <div className="flex h-[18px] shrink-0 items-stretch border-y border-[#222] bg-[#f2f2f2] pl-[2px] font-['Liberation_Sans',sans-serif] text-[12px] text-[#111]">
        {["|◂", "◂", "▸", "▸|"].map((g) => (
          <div key={g} className="flex w-[16px] shrink-0 items-center justify-center border-r border-[#a8a8a8] bg-[#ececec] text-[9px] leading-none text-[#888]">{g}</div>
        ))}
        <div className="w-[16px] shrink-0" />
        {leftTabs.map(([t, w]) => (
          <div key={t} className="relative flex shrink-0 items-center whitespace-pre" style={{ width: w }}>
            {t}
            <svg width={12} height={17} viewBox="0 0 12 17" className="absolute right-[9px] top-0" fill="none" stroke="#222"><path d="M1 0l6 16 3-6" /></svg>
          </div>
        ))}
        <div className="relative flex w-[150px] shrink-0 items-center whitespace-pre bg-white text-[12px] font-bold">
          <span className="ml-[1px]">Untitled Workspace:  24</span>
          <svg width={8} height={17} viewBox="0 0 8 17" className="absolute right-[0px] top-0" fill="none" stroke="#222"><path d="M1 16L7 0" /></svg>
        </div>
      </div>
      {/* status */}
      <div className="flex h-[19px] shrink-0 items-center bg-[#f0f0f0] font-['Noto_Sans',sans-serif] text-[14px] text-[#111]">
        <span className="ml-[2px] mr-auto">For Help, press F1</span>
        {cells.map(([t, w, c], i) => (
          <div key={t} className={`flex h-full shrink-0 items-center whitespace-pre ${i === 0 ? "" : "border-l border-[#d8d8d8] pl-[5px]"} ${c}`} style={{ width: w }}>{t}</div>
        ))}
        <div className="flex h-full w-[20px] shrink-0 items-start justify-center border-l border-[#d8d8d8]">
          <div className="h-[11px] w-[11px] rounded-full bg-[radial-gradient(circle_at_35%_35%,#ff9090,#e00000_55%,#800000)]" />
        </div>
        <div className="flex h-full w-[124px] shrink-0 items-center whitespace-pre border-l border-[#d8d8d8] pl-[3px]">28/02/2023 09:31</div>
      </div>
      <div className="h-[2px] shrink-0 bg-[#5a6470]" />
    </div>
  );
}
